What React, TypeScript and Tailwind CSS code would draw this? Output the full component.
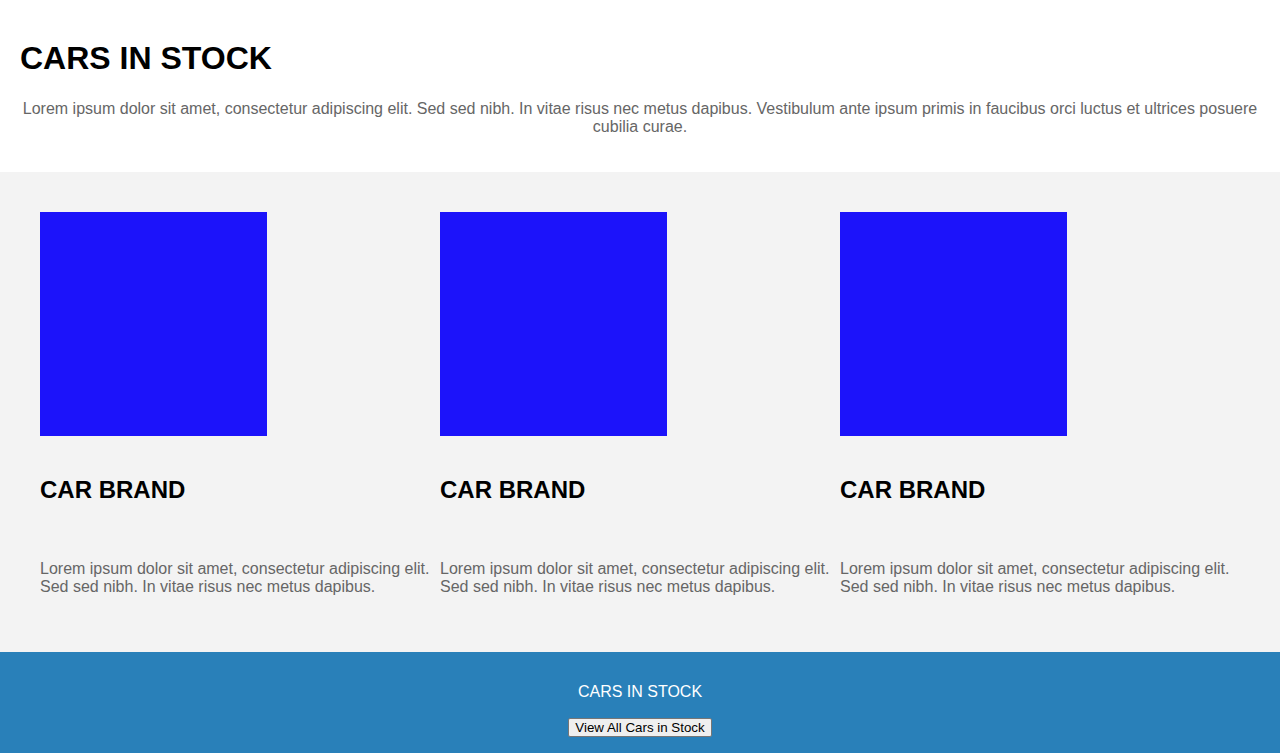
const cars = [1, 2, 3];

export default function App() {
  return (
    <div className="font-['Liberation_Sans',Arial,sans-serif]">
      <header className="bg-white p-5">
        <h1 className="mt-5 mb-[23px] text-[32px] leading-[37px] font-bold text-black">
          CARS IN STOCK
        </h1>
        <p className="mb-4 text-center text-base leading-[18px] text-[#666666]">
          Lorem ipsum dolor sit amet, consectetur adipiscing elit. Sed sed nibh. In vitae risus nec metus dapibus.
          Vestibulum ante ipsum primis in faucibus orci luctus et ultrices posuere cubilia curae.
        </p>
      </header>

      <section className="bg-[#f3f3f3] p-10">
        <div className="flex">
          {cars.map((c) => (
            <div key={c} className="w-[400px] pb-4">
              <div className="h-[224px] w-[227px] bg-[#1c13fa]" />
              <h2 className="mt-10 text-2xl leading-7 font-bold text-black">CAR BRAND</h2>
              <p className="mt-14 text-base leading-[18px] text-[#666666]">
                Lorem ipsum dolor sit amet, consectetur adipiscing elit. Sed sed nibh. In vitae risus nec metus
                dapibus.
              </p>
            </div>
          ))}
        </div>
      </section>

      <footer className="flex flex-col items-center bg-[#2980b9] pt-[31px] pb-4">
        <p className="text-base leading-[18px] text-white">CARS IN STOCK</p>
        <button className="mt-[17px] h-[19px] rounded-[2px] border border-[#767676] bg-[#efefef] px-[6px] text-[13.33px] leading-[15px] text-black font-['Liberation_Sans',Arial,sans-serif]">
          View All Cars in Stock
        </button>
      </footer>
    </div>
  );
}
